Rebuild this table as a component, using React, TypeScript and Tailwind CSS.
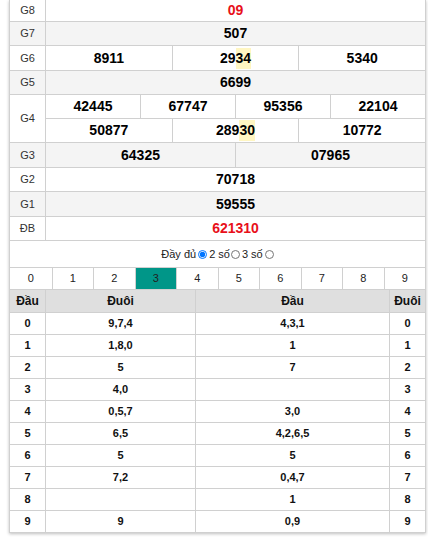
import React from "react";

const B = "border-[#d0d0d0]";

function Num({ children, red }: { children: React.ReactNode; red?: boolean }) {
  return (
    <div
      className={`flex-1 flex items-center justify-center text-[14px] font-bold ${red ? "text-[#e8101a]" : "text-black"}`}
    >
      {children}
    </div>
  );
}

function Row({
  label,
  h,
  alt,
  children,
}: {
  label: string;
  h: string;
  alt?: boolean;
  children: React.ReactNode;
}) {
  return (
    <div className={`flex ${h} border-b ${B} ${alt ? "bg-[#f4f4f4]" : "bg-white"}`}>
      <div className={`w-[36px] shrink-0 border-r ${B} flex items-center justify-center text-[11px] text-[#333]`}>
        {label}
      </div>
      <div className="flex-1 flex">{children}</div>
    </div>
  );
}

const HL = ({ children }: { children: React.ReactNode }) => (
  <span className="bg-[#fff6c2]">{children}</span>
);

const data: [string, string, string, string][] = [
  ["0", "9,7,4", "4,3,1", "0"],
  ["1", "1,8,0", "1", "1"],
  ["2", "5", "7", "2"],
  ["3", "4,0", "", "3"],
  ["4", "0,5,7", "3,0", "4"],
  ["5", "6,5", "4,2,6,5", "5"],
  ["6", "5", "5", "6"],
  ["7", "7,2", "0,4,7", "7"],
  ["8", "", "1", "8"],
  ["9", "9", "0,9", "9"],
];

export default function App() {
  return (
    <div className="w-[428px] min-h-[537px] bg-white" style={{ fontFamily: '"Liberation Sans", Arial, sans-serif' }}>
      <div className={`ml-[9px] w-[417px] border-l border-r ${B} shadow-[0_1px_3px_rgba(0,0,0,0.25)]`}>
        <Row label="G8" h="h-[22px]">
          <Num red>09</Num>
        </Row>
        <Row label="G7" h="h-[24px]" alt>
          <Num>507</Num>
        </Row>
        <Row label="G6" h="h-[25px]">
          <Num>8911</Num>
          <div className={`flex-1 flex border-l ${B}`}>
            <Num>
              29<HL>34</HL>
            </Num>
          </div>
          <div className={`flex-1 flex border-l ${B}`}>
            <Num>5340</Num>
          </div>
        </Row>
        <Row label="G5" h="h-[24px]" alt>
          <Num>6699</Num>
        </Row>
        <Row label="G4" h="h-[48px]">
          <div className="flex-1 flex flex-col">
            <div className={`flex h-[24px] border-b ${B}`}>
              <Num>42445</Num>
              <div className={`flex-1 flex border-l ${B}`}>
                <Num>67747</Num>
              </div>
              <div className={`flex-1 flex border-l ${B}`}>
                <Num>95356</Num>
              </div>
              <div className={`flex-1 flex border-l ${B}`}>
                <Num>22104</Num>
              </div>
            </div>
            <div className="flex flex-1">
              <Num>50877</Num>
              <div className={`flex-1 flex border-l ${B}`}>
                <Num>
                  289<HL>30</HL>
                </Num>
              </div>
              <div className={`flex-1 flex border-l ${B}`}>
                <Num>10772</Num>
              </div>
            </div>
          </div>
        </Row>
        <Row label="G3" h="h-[25px]" alt>
          <Num>64325</Num>
          <div className={`flex-1 flex border-l ${B}`}>
            <Num>07965</Num>
          </div>
        </Row>
        <Row label="G2" h="h-[24px]">
          <Num>70718</Num>
        </Row>
        <Row label="G1" h="h-[25px]" alt>
          <Num>59555</Num>
        </Row>
        <Row label="ĐB" h="h-[24px]">
          <Num red>621310</Num>
        </Row>

        <div className="h-[26px] flex items-center justify-center text-[11px] text-[#222]">
          <span className="mr-[2px]">Đầy đủ</span>
          <input type="radio" name="opt" defaultChecked className="w-[9px] h-[9px] m-0" />
          <span className="ml-[2px] mr-[1px]">2 số</span>
          <input type="radio" name="opt" className="w-[9px] h-[9px] m-0" />
          <span className="ml-[2px] mr-[2px]">3 số</span>
          <input type="radio" name="opt" className="w-[9px] h-[9px] m-0" />
        </div>

        <div className={`grid grid-cols-10 h-[23px] border-t border-b ${B}`}>
          {["0", "1", "2", "3", "4", "5", "6", "7", "8", "9"].map((d, i) => (
            <div
              key={d}
              className={`flex items-center justify-center text-[11px] text-[#222] ${i > 0 ? `border-l ${B}` : ""} ${d === "3" ? "bg-[#009688]" : "bg-white"}`}
            >
              {d}
            </div>
          ))}
        </div>

        <div className={`flex h-[23px] bg-[#dfdfdf] border-b ${B} text-[12px] font-bold text-[#111]`}>
          <div className={`w-[36px] flex items-center justify-center border-r ${B}`}>Đầu</div>
          <div className={`w-[150px] flex items-center justify-center border-r ${B}`}>Đuôi</div>
          <div className={`flex-1 flex items-center justify-center border-r ${B}`}>Đầu</div>
          <div className="w-[35px] flex items-center justify-center">Đuôi</div>
        </div>
        {data.map((r) => (
          <div key={r[0]} className={`flex h-[22px] border-b ${B} text-[11px] font-bold text-[#111]`}>
            <div className={`w-[36px] flex items-center justify-center border-r ${B}`}>{r[0]}</div>
            <div className={`w-[150px] flex items-center justify-center border-r ${B}`}>{r[1]}</div>
            <div className={`flex-1 flex items-center justify-center border-r ${B}`}>{r[2]}</div>
            <div className="w-[35px] flex items-center justify-center">{r[3]}</div>
          </div>
        ))}
      </div>
    </div>
  );
}
